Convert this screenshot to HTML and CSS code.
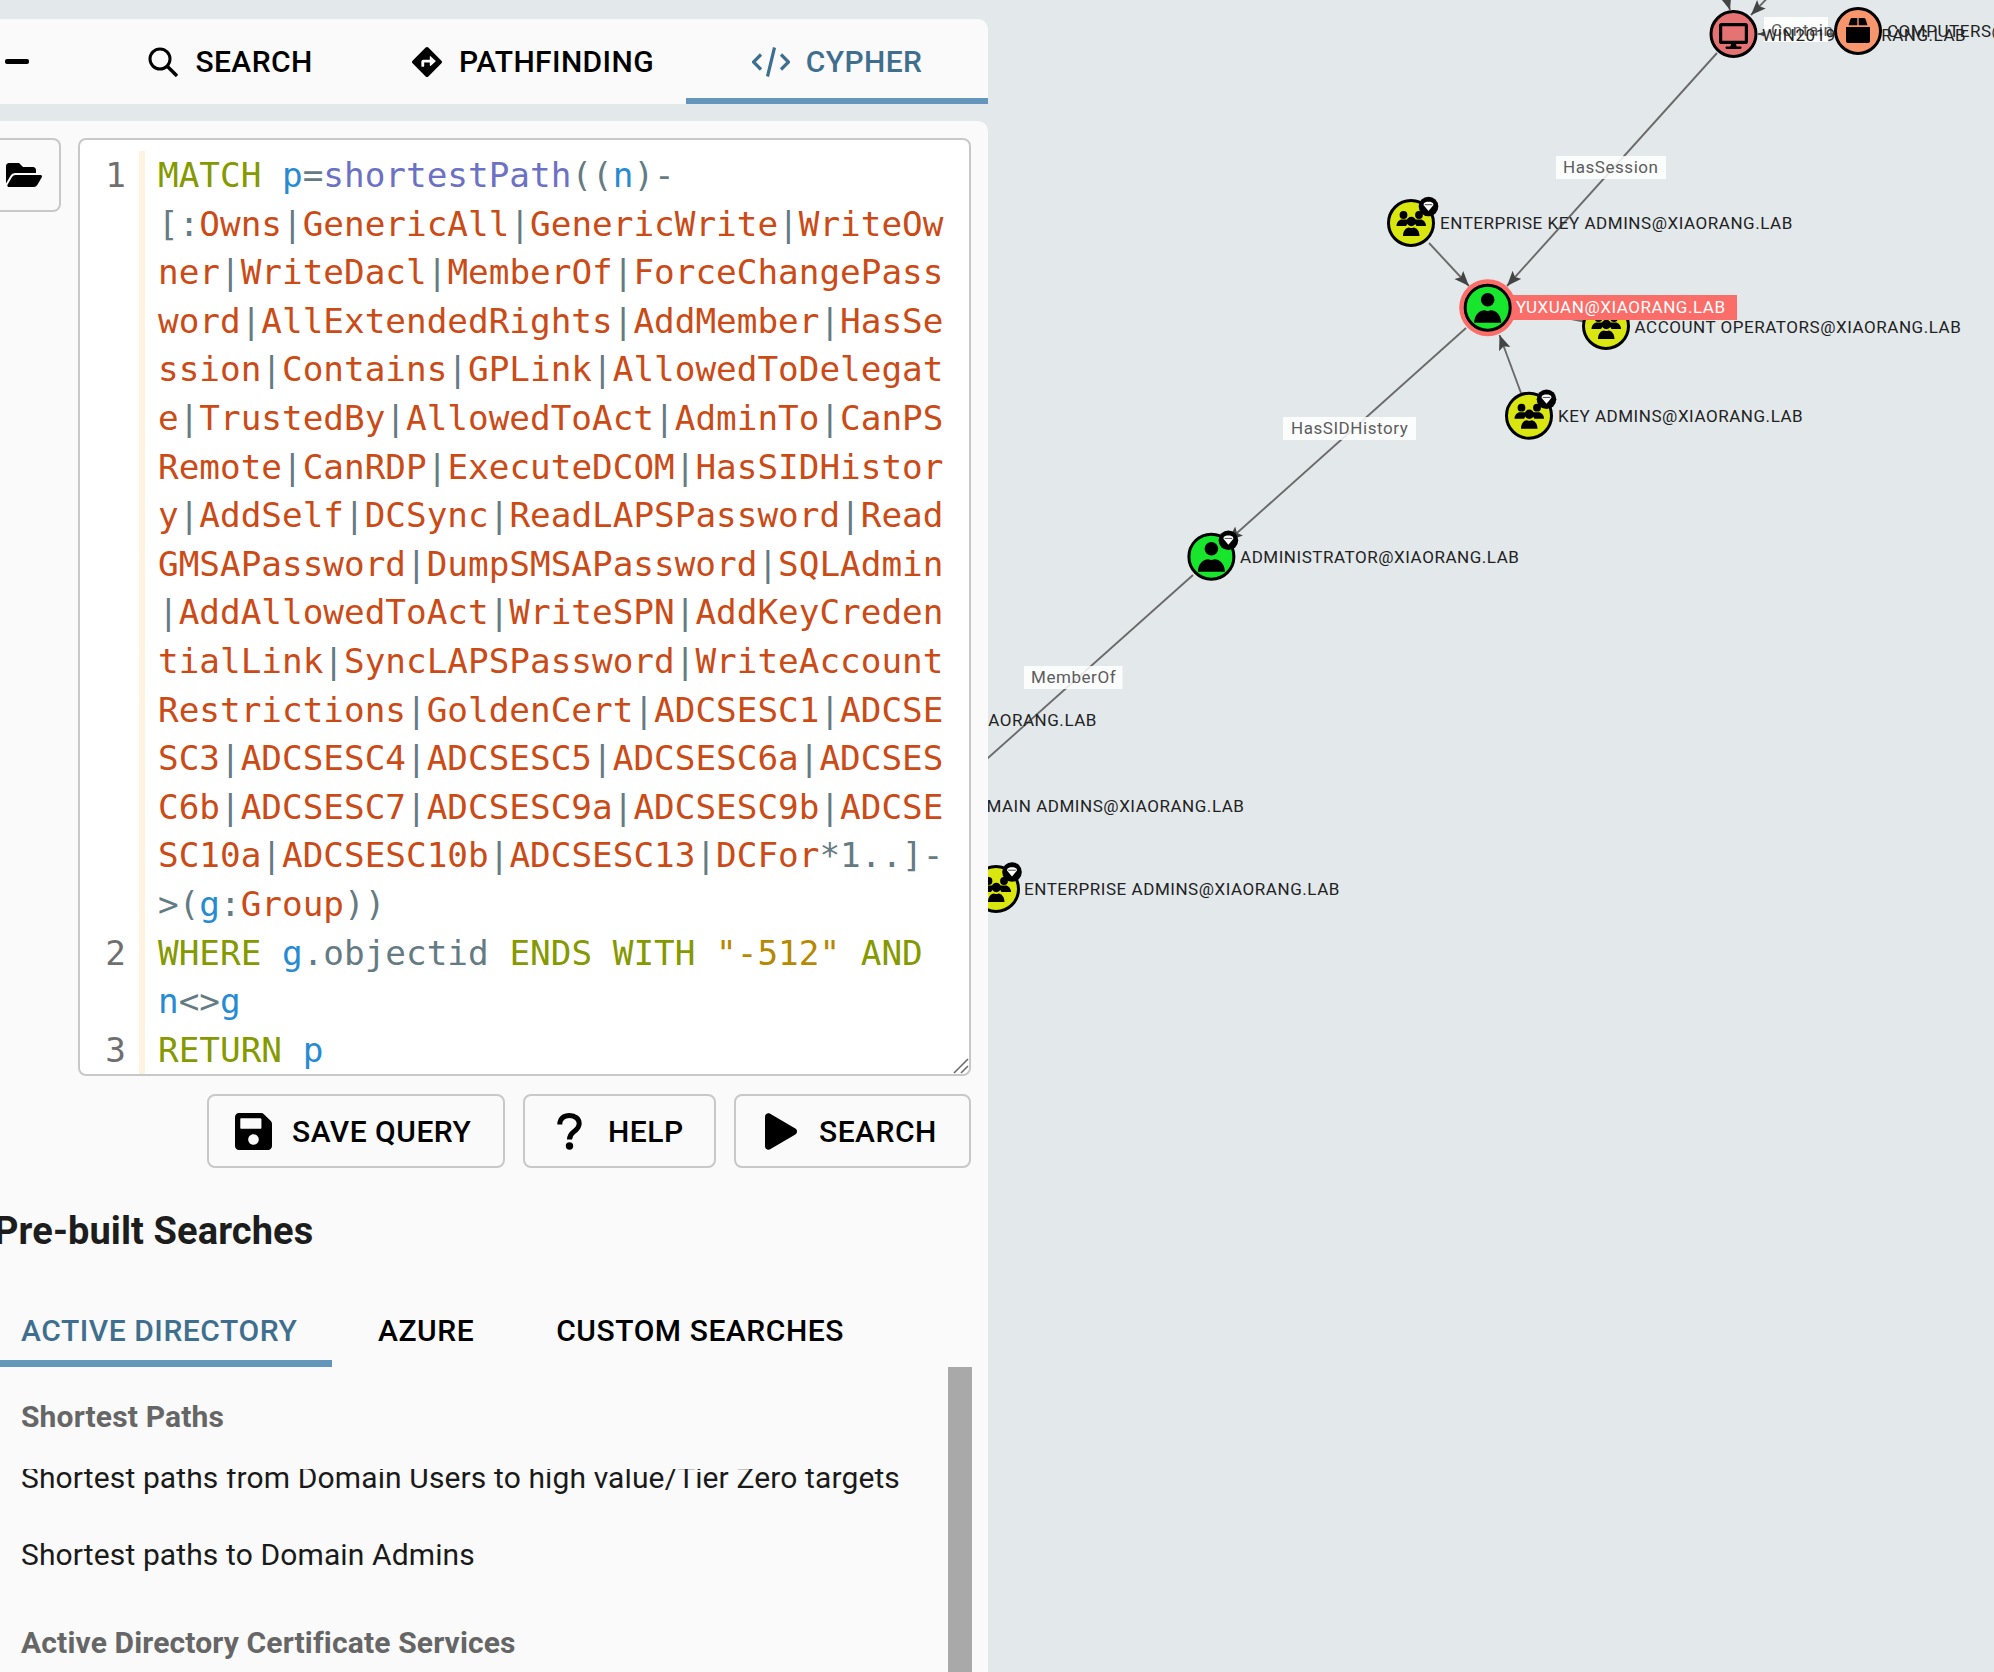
FILE: index.html
```html
<!DOCTYPE html>
<html lang="en">
<head>
<meta charset="utf-8">
<title>BloodHound</title>
<link rel="stylesheet" href="styles.css">
</head>
<body>
<div class="app">
  <svg class="graph" width="1994" height="1672" viewBox="0 0 1994 1672" xmlns="http://www.w3.org/2000/svg">
    <defs>
      <marker id="arrow" markerUnits="userSpaceOnUse" markerWidth="16" markerHeight="14" refX="15" refY="6" orient="auto">
        <path d="M0 0L15 6L0 12L3 6Z" fill="#444"/>
      </marker>
      <g id="user-icon">
        <circle cx="0" cy="-8" r="6.8" fill="#000"/>
        <path d="M-13.5 15C-13.5 7 -8 2.5 -3 2.5C-1 3.4 1 3.4 3 2.5C8 2.5 13.5 7 13.5 15Z" fill="#000"/>
      </g>
      <g id="group-icon">
        <circle cx="-7.5" cy="-8" r="3.9" fill="#000"/>
        <circle cx="8" cy="-8" r="3.9" fill="#000"/>
        <path d="M-14.5 3C-14.5 -1 -11.5 -3.5 -9 -3.5L-5 -3.5C-3.5 -3.5 -2.5 -2.8 -1.8 -2L-5 3Z" fill="#000"/>
        <path d="M15 3C15 -1 12 -3.5 9.5 -3.5L5.5 -3.5C4 -3.5 3 -2.8 2.3 -2L5.5 3Z" fill="#000"/>
        <circle cx="0.3" cy="-1.5" r="4.7" fill="#000"/>
        <path d="M-8 13C-8 8 -5 4.5 -2 4.5C-0.5 5.3 1 5.3 2.5 4.5C5.5 4.5 8.5 8 8.5 13Z" fill="#000"/>
      </g>
      <g id="badge">
        <circle cx="0" cy="0" r="9.8" fill="#000"/>
        <path d="M-4.5 -3.5L-1.8 -4.8L1.8 -4.8L4.5 -3.5L5 -1.5L0 4.5L-5 -1.5Z" fill="#fff"/>
        <path d="M-3.8 -1.8L3.8 -1.8" stroke="#000" stroke-width="0.7"/>
      </g>
    </defs>

    <g class="edges">
      <line x1="1722" y1="-16" x2="1730" y2="10" marker-end="url(#arrow)"/>
      <line x1="1780" y1="-15" x2="1751" y2="15" marker-end="url(#arrow)"/>
      <line x1="1833" y1="34" x2="1758" y2="34" marker-end="url(#arrow)"/>
      <line x1="1717" y1="53" x2="1507" y2="286" marker-end="url(#arrow)"/>
      <line x1="1429" y1="243" x2="1469" y2="286" marker-end="url(#arrow)"/>
      <line x1="1521" y1="393" x2="1499.5" y2="335" marker-end="url(#arrow)"/>
      <line x1="1606" y1="326" x2="1516" y2="308"/>
      <line x1="1466" y1="328" x2="1228" y2="541" marker-end="url(#arrow)"/>
      <line x1="1193" y1="575" x2="970" y2="774"/>
    </g>

    <g class="edge-tags">
      <rect x="1764" y="17" width="64" height="25"/>
      <text class="edge-text" x="1771" y="36">Contains</text>
      <rect x="1556" y="156" width="110" height="23"/>
      <text class="edge-text" x="1563" y="172.5">HasSession</text>
      <rect x="1283" y="417" width="133" height="23"/>
      <text class="edge-text" x="1291" y="433.5">HasSIDHistory</text>
      <rect x="1024" y="666" width="98.5" height="23"/>
      <text class="edge-text" x="1031" y="682.5">MemberOf</text>
    </g>

    <text class="node-label" x="1762" y="40.7">WIN2019.XIAORANG.LAB</text>

    <g transform="translate(1733.5 34)">
      <circle class="ring win" r="22.5"/>
      <svg x="-14.5" y="-11" width="29" height="26" viewBox="0 0 576 512"><path d="M528 0H48C21.5 0 0 21.5 0 48v320c0 26.5 21.5 48 48 48h192l-16 48h-72c-13.3 0-24 10.7-24 24s10.7 24 24 24h272c13.3 0 24-10.7 24-24s-10.7-24-24-24h-72l-16-48h192c26.5 0 48-21.5 48-48V48c0-26.5-21.5-48-48-48zm-16 352H64V64h448v288z"/></svg>
    </g>
    <g transform="translate(1858 31)">
      <circle class="ring ou" r="22.5"/>
      <svg x="-12" y="-13" width="24" height="25" viewBox="0 0 24 25"><path d="M2.5 7.3L4.2 1.7C4.5 0.7 5.3 0 6.3 0H11.3V7.3ZM12.7 0H17.7C18.7 0 19.5 0.7 19.8 1.7L21.5 7.3H12.7ZM0 9H24V23C24 24.1 23.1 25 22 25H2C0.9 25 0 24.1 0 23Z"/></svg>
    </g>
    <text class="node-label" x="1887" y="37">COMPUTERS@XIAORANG.LAB</text>

    <g transform="translate(1411 223)">
      <circle class="ring group" r="22.5"/>
      <use href="#group-icon"/>
      <use href="#badge" x="17.5" y="-16.5"/>
    </g>
    <text class="node-label" x="1440" y="229">ENTERPRISE KEY ADMINS@XIAORANG.LAB</text>

    <g transform="translate(1606 326)">
      <circle class="ring group" r="22.5"/>
      <use href="#group-icon"/>
    </g>
    <text class="node-label" x="1634.5" y="332.7">ACCOUNT OPERATORS@XIAORANG.LAB</text>

    <rect class="hl-tag" x="1511" y="295" width="226" height="25"/>
    <g transform="translate(1487.7 307.7)">
      <circle class="halo" r="28.5"/>
      <circle class="ring user" r="22.5"/>
      <use href="#user-icon"/>
    </g>
    <text class="node-label hl-text" x="1516" y="313">YUXUAN@XIAORANG.LAB</text>

    <g transform="translate(1529 415.7)">
      <circle class="ring group" r="22.5"/>
      <use href="#group-icon"/>
      <use href="#badge" x="17.5" y="-16.5"/>
    </g>
    <text class="node-label" x="1558" y="421.7">KEY ADMINS@XIAORANG.LAB</text>

    <g transform="translate(1211.4 556.7)">
      <circle class="ring user" r="22.5"/>
      <use href="#user-icon"/>
      <use href="#badge" x="17" y="-16.5"/>
    </g>
    <text class="node-label" x="1240" y="563">ADMINISTRATOR@XIAORANG.LAB</text>

    <text class="node-label label-end" x="1097" y="726">ADMINISTRATORS@XIAORANG.LAB</text>
    <text class="node-label label-end" x="1244.5" y="811.7">DOMAIN ADMINS@XIAORANG.LAB</text>

    <g transform="translate(996 889)">
      <circle class="ring group" r="22.5"/>
      <use href="#group-icon"/>
      <use href="#badge" x="16" y="-17"/>
    </g>
    <text class="node-label" x="1024" y="895">ENTERPRISE ADMINS@XIAORANG.LAB</text>
  </svg>

  <aside class="sidebar">
    <nav class="mode-tabs">
      <div class="mode-tab mode-tab-stub"><span class="stub-dash"></span></div>
      <div class="mode-tab mode-tab-search">
        <svg class="tab-icon" width="30" height="30" viewBox="0 0 30 30"><circle cx="12" cy="12" r="10" fill="none" stroke="#000" stroke-width="3"/><path d="M19.5 19.5L29 29" stroke="#000" stroke-width="3.4" fill="none"/></svg>
        <span>SEARCH</span>
      </div>
      <div class="mode-tab mode-tab-path">
        <svg class="tab-icon" width="30" height="30" viewBox="0 0 512 512"><path d="M502.61 233.32L278.68 9.39c-12.52-12.52-32.83-12.52-45.36 0L9.39 233.32c-12.52 12.53-12.52 32.83 0 45.36l223.93 223.93c12.52 12.53 32.83 12.53 45.36 0l223.93-223.93c12.52-12.53 12.52-32.83 0-45.36zm-100.98 12.56l-84.21 77.73c-5.12 4.73-13.43 1.1-13.43-5.88V264h-96v64c0 4.42-3.58 8-8 8h-32c-4.42 0-8-3.58-8-8v-80c0-17.67 14.33-32 32-32h112v-53.73c0-6.97 8.3-10.61 13.43-5.88l84.21 77.73c3.43 3.17 3.43 8.59 0 11.76z"/></svg>
        <span>PATHFINDING</span>
      </div>
      <div class="mode-tab mode-tab-cypher is-active">
        <svg class="tab-icon" width="38" height="30" viewBox="0 0 38 30"><path d="M9 7.5L1.5 15L9 22.5M29 7.5L36.5 15L29 22.5M22.5 0.5L15.5 29.5" fill="none" stroke="#3f6f8f" stroke-width="3.2"/></svg>
        <span>CYPHER</span>
      </div>
    </nav>

    <section class="query-card">
      <div class="query-row">
        <button class="folder-btn" type="button" aria-label="Open queries">
          <svg width="36" height="32" viewBox="0 0 576 512"><path d="M572.694 292.093L500.27 416.248A63.997 63.997 0 0 1 444.989 448H45.025c-18.523 0-30.064-20.093-20.731-36.093l72.424-124.155A64 64 0 0 1 152 256h399.964c18.523 0 30.064 20.093 20.73 36.093zM152 224h328v-48c0-26.51-21.49-48-48-48H272l-64-64H48C21.49 64 0 85.49 0 112v278.046l69.077-118.418C86.214 242.25 117.989 224 152 224z"/></svg>
        </button>
        <div class="editor">
          <div class="cm-row"><span class="num">1</span><span class="code"><span class="k">MATCH</span> <span class="v">p</span><span class="p">=</span><span class="f">shortestPath</span><span class="p">((</span><span class="v">n</span><span class="p">)-</span></span></div>
          <div class="cm-row"><span class="num"></span><span class="code"><span class="p">[:</span>Owns<span class="p">|</span>GenericAll<span class="p">|</span>GenericWrite<span class="p">|</span>WriteOw</span></div>
          <div class="cm-row"><span class="num"></span><span class="code">ner<span class="p">|</span>WriteDacl<span class="p">|</span>MemberOf<span class="p">|</span>ForceChangePass</span></div>
          <div class="cm-row"><span class="num"></span><span class="code">word<span class="p">|</span>AllExtendedRights<span class="p">|</span>AddMember<span class="p">|</span>HasSe</span></div>
          <div class="cm-row"><span class="num"></span><span class="code">ssion<span class="p">|</span>Contains<span class="p">|</span>GPLink<span class="p">|</span>AllowedToDelegat</span></div>
          <div class="cm-row"><span class="num"></span><span class="code">e<span class="p">|</span>TrustedBy<span class="p">|</span>AllowedToAct<span class="p">|</span>AdminTo<span class="p">|</span>CanPS</span></div>
          <div class="cm-row"><span class="num"></span><span class="code">Remote<span class="p">|</span>CanRDP<span class="p">|</span>ExecuteDCOM<span class="p">|</span>HasSIDHistor</span></div>
          <div class="cm-row"><span class="num"></span><span class="code">y<span class="p">|</span>AddSelf<span class="p">|</span>DCSync<span class="p">|</span>ReadLAPSPassword<span class="p">|</span>Read</span></div>
          <div class="cm-row"><span class="num"></span><span class="code">GMSAPassword<span class="p">|</span>DumpSMSAPassword<span class="p">|</span>SQLAdmin</span></div>
          <div class="cm-row"><span class="num"></span><span class="code"><span class="p">|</span>AddAllowedToAct<span class="p">|</span>WriteSPN<span class="p">|</span>AddKeyCreden</span></div>
          <div class="cm-row"><span class="num"></span><span class="code">tialLink<span class="p">|</span>SyncLAPSPassword<span class="p">|</span>WriteAccount</span></div>
          <div class="cm-row"><span class="num"></span><span class="code">Restrictions<span class="p">|</span>GoldenCert<span class="p">|</span>ADCSESC1<span class="p">|</span>ADCSE</span></div>
          <div class="cm-row"><span class="num"></span><span class="code">SC3<span class="p">|</span>ADCSESC4<span class="p">|</span>ADCSESC5<span class="p">|</span>ADCSESC6a<span class="p">|</span>ADCSES</span></div>
          <div class="cm-row"><span class="num"></span><span class="code">C6b<span class="p">|</span>ADCSESC7<span class="p">|</span>ADCSESC9a<span class="p">|</span>ADCSESC9b<span class="p">|</span>ADCSE</span></div>
          <div class="cm-row"><span class="num"></span><span class="code">SC10a<span class="p">|</span>ADCSESC10b<span class="p">|</span>ADCSESC13<span class="p">|</span>DCFor<span class="p">*1..]-</span></span></div>
          <div class="cm-row"><span class="num"></span><span class="code"><span class="p">&gt;(</span><span class="v">g</span><span class="p">:</span>Group<span class="p">))</span></span></div>
          <div class="cm-row"><span class="num">2</span><span class="code"><span class="k">WHERE</span> <span class="v">g</span><span class="p">.objectid</span> <span class="k">ENDS WITH</span> <span class="s">"-512"</span> <span class="k">AND</span></span></div>
          <div class="cm-row"><span class="num"></span><span class="code"><span class="v">n</span><span class="p">&lt;&gt;</span><span class="v">g</span></span></div>
          <div class="cm-row"><span class="num">3</span><span class="code"><span class="k">RETURN</span> <span class="v">p</span></span></div>
          <svg class="grip" width="16" height="16" viewBox="0 0 16 16"><path d="M15 1L1 15M15 8L8 15" fill="none" stroke="#666" stroke-width="1.5"/></svg>
        </div>
      </div>

      <div class="query-actions">
        <button class="action-btn action-save" type="button">
          <span class="action-icon"><svg width="37" height="37" viewBox="0 32 448 448"><path d="M433.941 129.941l-83.882-83.882A48 48 0 0 0 316.118 32H48C21.49 32 0 53.49 0 80v352c0 26.51 21.49 48 48 48h352c26.51 0 48-21.49 48-48V163.882a48 48 0 0 0-14.059-33.941zM224 416c-35.346 0-64-28.654-64-64 0-35.346 28.654-64 64-64s64 28.654 64 64c0 35.346-28.654 64-64 64zm96-304.52V212c0 6.627-5.373 12-12 12H76c-6.627 0-12-5.373-12-12V108c0-6.627 5.373-12 12-12h228.52c3.183 0 6.235 1.264 8.485 3.515l3.48 3.48A11.996 11.996 0 0 1 320 111.48z"/></svg></span>
          <span>SAVE QUERY</span>
        </button>
        <button class="action-btn action-help" type="button">
          <span class="action-icon"><svg width="25" height="37" viewBox="0 0 25 37"><path d="M2.8 11.5C2.8 5.5 7 2.5 12.5 2.5C18 2.5 22.2 5.8 22.2 10.5C22.2 14.8 19.5 16.8 16.5 19C13.8 21 12.5 22.5 12.5 26.5" fill="none" stroke="#000" stroke-width="5"/><circle cx="12.5" cy="33" r="3.7"/></svg></span>
          <span>HELP</span>
        </button>
        <button class="action-btn action-run" type="button">
          <span class="action-icon"><svg width="32" height="37" viewBox="0 0 448 512"><path d="M424.4 214.7L72.4 6.6C43.8-10.3 0 6.1 0 47.9V464c0 37.5 40.7 60.1 72.4 41.3l352-208c31.4-18.5 31.5-64.1 0-82.6z"/></svg></span>
          <span>SEARCH</span>
        </button>
      </div>

      <h2 class="prebuilt-title">Pre-built Searches</h2>

      <div class="prebuilt-tabs">
        <div class="prebuilt-tab is-active">ACTIVE DIRECTORY</div>
        <div class="prebuilt-tab">AZURE</div>
        <div class="prebuilt-tab">CUSTOM SEARCHES</div>
      </div>

      <div class="prebuilt-body">
        <div class="prebuilt-list">
          <h3 class="list-heading">Shortest Paths</h3>
          <div class="list-item is-scrolled-under">Shortest paths from Domain Users to high value/Tier Zero targets</div>
          <div class="list-item">Shortest paths to Domain Admins</div>
          <h3 class="list-heading list-heading-next">Active Directory Certificate Services</h3>
        </div>
        <div class="scroll-thumb"></div>
      </div>
    </section>
  </aside>
</div>
</body>
</html>
```

FILE: styles.css
```css
* { box-sizing: border-box; }

html, body {
  margin: 0;
  height: 100%;
  overflow: hidden;
}

body {
  background: #e3e8eb;
  font-family: Roboto, "Liberation Sans", sans-serif;
  color: #000;
}

.app {
  position: relative;
  display: flex;
  height: 1672px;
  overflow: hidden;
}

/* Graph canvas */
.graph {
  position: absolute;
  left: 0;
  top: 0;
}

.edges line {
  stroke: #6a6a6a;
  stroke-width: 1.9;
}

.edge-tags rect {
  fill: #fff;
  fill-opacity: 0.85;
}

.edge-text {
  font-family: Roboto, sans-serif;
  font-size: 17px;
  letter-spacing: 0.55px;
  fill: #5c5c5c;
}

.node-label {
  font-family: Roboto, sans-serif;
  font-size: 17px;
  letter-spacing: 0.54px;
  fill: #222;
}

.label-end { text-anchor: end; }

.hl-text { fill: #fff; }
.hl-tag { fill: #fb6d69; }
.halo { fill: #fb6d69; }

.ring {
  stroke: #000;
  stroke-width: 3;
}
.ring.group { fill: #d9e60f; }
.ring.user { fill: #17e62c; }
.ring.win { fill: #e57373; }
.ring.ou { fill: #f7956c; }

/* Sidebar */
.sidebar {
  position: relative;
  z-index: 1;
  width: 988px;
  height: 100%;
  padding-top: 19px;
  display: flex;
  flex-direction: column;
  gap: 17px;
}

.mode-tabs {
  display: flex;
  height: 85px;
  background: #fafafa;
  border-top-right-radius: 10px;
}

.mode-tab {
  display: flex;
  align-items: center;
  justify-content: center;
  gap: 17px;
  font-size: 30px;
  font-weight: 500;
  letter-spacing: 0.4px;
}

.mode-tab-stub { width: 81px; justify-content: flex-start; padding-left: 5px; }
.mode-tab-search { width: 299px; }
.mode-tab-path { width: 306px; }
.mode-tab-cypher { width: 302px; gap: 16px; }

.tab-icon { flex: none; }

.stub-dash {
  width: 24px;
  height: 5px;
  border-radius: 2px;
  background: #000;
}

.mode-tab.is-active {
  color: #3f6f8f;
  box-shadow: inset 0 -6px 0 #6496bb;
}

.query-card {
  flex: 1;
  min-height: 0;
  background: #fafafa;
  border-top-right-radius: 10px;
  padding-top: 17px;
  display: flex;
  flex-direction: column;
}

.query-row {
  display: flex;
  align-items: flex-start;
  gap: 17px;
  padding-right: 17px;
}

.folder-btn {
  flex: none;
  width: 61px;
  height: 74px;
  padding: 0 0 0 6px;
  display: flex;
  align-items: center;
  background: #fafafa;
  border: 2px solid #c8c8c8;
  border-left: 0;
  border-radius: 0 8px 8px 0;
}

.editor {
  position: relative;
  width: 893px;
  height: 938px;
  padding-top: 11px;
  background: #fff;
  border: 2px solid #c8c8c8;
  border-radius: 8px;
  overflow: hidden;
  font-family: "DejaVu Sans Mono", monospace;
  font-size: 34.35px;
  line-height: 48.6px;
  color: #cb4b16;
}

.grip {
  position: absolute;
  right: 0;
  bottom: 0;
}

.cm-row {
  display: flex;
  height: 48.6px;
}

.num {
  flex: none;
  width: 59px;
  padding-right: 13px;
  text-align: right;
  color: #6f6f6f;
}

.code {
  flex: 1;
  border-left: 6px solid #fdf3e0;
  padding-left: 13px;
  white-space: pre;
}

.k { color: #859900; }
.v { color: #268bd2; }
.f { color: #6c71c4; }
.p { color: #657b83; }
.s { color: #b58900; }

.query-actions {
  display: flex;
  justify-content: flex-end;
  gap: 18px;
  padding-right: 17px;
  margin-top: 18px;
}

.action-btn {
  height: 74px;
  display: flex;
  align-items: center;
  gap: 20px;
  padding: 0 0 0 26px;
  background: #fafafa;
  border: 2px solid #c8c8c8;
  border-radius: 8px;
  font-family: Roboto, sans-serif;
  font-size: 30px;
  font-weight: 500;
  letter-spacing: 0.5px;
  color: #000;
}

.action-save { width: 298px; }
.action-help { width: 193px; }
.action-run { width: 237px; }

.action-icon {
  flex: none;
  width: 37px;
  display: flex;
  justify-content: center;
}

.prebuilt-title {
  margin: 41px 0 0 -6px;
  font-size: 38px;
  line-height: 44px;
  font-weight: 700;
  letter-spacing: 0.1px;
  color: #1d1d1d;
}

.prebuilt-tabs {
  display: flex;
  height: 74px;
  margin-top: 40px;
  font-size: 30px;
  font-weight: 500;
  letter-spacing: 0.55px;
  white-space: nowrap;
}

.prebuilt-tab {
  display: flex;
  align-items: center;
  padding: 7px 41px 0;
  border-bottom: 7px solid transparent;
}

.prebuilt-tab.is-active {
  width: 352px;
  margin-left: -20px;
  margin-right: 5px;
  color: #3f6f8f;
  border-bottom-color: #6496bb;
}

.prebuilt-body {
  flex: 1;
  min-height: 0;
  display: flex;
  padding-right: 16px;
  overflow: hidden;
}

.prebuilt-list {
  flex: 1;
  padding: 27px 0 0 21px;
}

.list-heading {
  margin: 0;
  font-size: 30px;
  line-height: 45px;
  font-weight: 700;
  letter-spacing: 0.15px;
  color: #666;
}

.list-heading-next { margin-top: 27px; }

.list-item {
  font-size: 30px;
  line-height: 77px;
  letter-spacing: 0.12px;
  color: #1a1a1a;
}

.is-scrolled-under {
  clip-path: inset(30px 0 0 0);
}

.scroll-thumb {
  flex: none;
  width: 24px;
  background: #a9a9a9;
}
```
